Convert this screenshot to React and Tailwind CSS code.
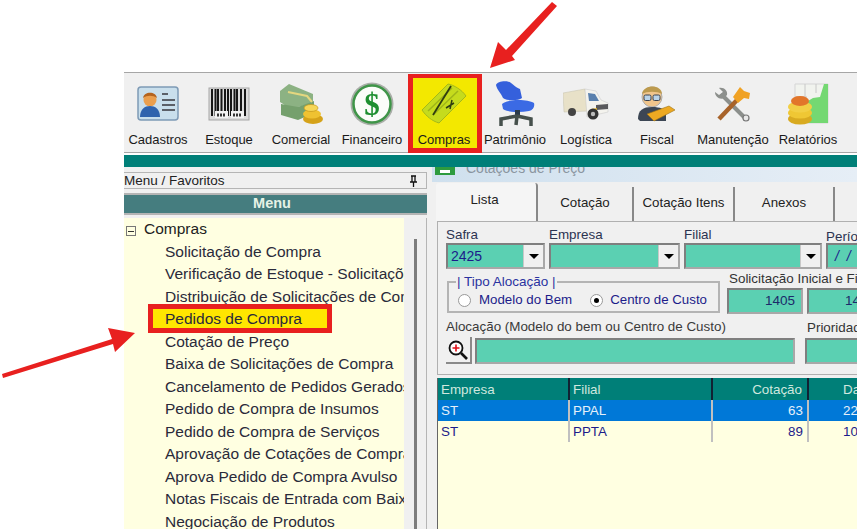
const font = "font-['Liberation_Sans',Arial,sans-serif]";

// toolbar icons drawn by hand, they are little bitmaps in the original
function Cadastros() {
  return (
    <svg width="44" height="38" viewBox="0 0 44 38">
      <rect x="2" y="2" width="40" height="33" rx="3" fill="#c9dfec" stroke="#7e9ab5" strokeWidth="1.500" />
      <circle cx="14" cy="15" r="6.500" fill="#ea9f4e" />
      <path d="M4 32c0-8 5-11 10-11s10 3 10 11z" fill="#2f63ad" />
      <path d="M7 13c1-7 13-7 14 0-4-3-10-3-14 0z" fill="#b4641f" />
      <path d="M26 9h6M26 15h13M26 20h13M26 25h13" stroke="#5b6068" strokeWidth="2.200" />
    </svg>
  );
}

function Estoque() {
  return (
    <svg width="44" height="36" viewBox="0 0 44 36">
      <rect x="2" y="2" width="40" height="32" fill="#dcdcdc" stroke="#a5a5a5" />
      <path d="M5 3v27M8.500 3v27M11 3v27M14.500 3v27M18 3v27M21 3v27M24 3v27M27.500 3v27M30 3v27M34 3v27M38 3v27" stroke="#161616" strokeWidth="2" />
      <rect x="8" y="25" width="13" height="7" fill="#f2f2f2" />
      <rect x="24" y="25" width="13" height="7" fill="#f2f2f2" />
      <path d="M10 29h9M26 29h9" stroke="#333" strokeWidth="3" strokeDasharray="2 1" />
    </svg>
  );
}

function Comercial() {
  return (
    <svg width="46" height="42" viewBox="0 0 46 42">
      <path d="M2 8l9-7 24 10v9L13 26 2 19z" fill="#8cb283" />
      <path d="M3 21l17 3 16-6v12l-16 7-17-5z" fill="#75a06d" />
      <path d="M10 9l19 4 5 6" fill="none" stroke="#e4d77f" strokeWidth="2" />
      <ellipse cx="35" cy="36" rx="10" ry="5" fill="#d5a219" />
      <ellipse cx="34" cy="31" rx="9" ry="4.500" fill="#efc231" />
      <ellipse cx="33" cy="25" rx="7" ry="3.500" fill="#f6d656" stroke="#c4951a" strokeWidth=".7" />
    </svg>
  );
}

function Financeiro() {
  return (
    <svg width="44" height="44" viewBox="0 0 44 44">
      <circle cx="22" cy="22" r="21.500" fill="#a9aea8" />
      <circle cx="22" cy="22" r="18.500" fill="#fbfdf9" stroke="#3f9548" strokeWidth="2.500" />
      <text x="22" y="33" textAnchor="middle" fontSize="31" fontWeight="700" fontFamily="Liberation Serif" fill="#1e8f30">$</text>
    </svg>
  );
}

function ComprasIcon() {
  return (
    <svg width="46" height="44" viewBox="0 0 46 44">
      <path d="M1 28L27 2c6 1 14 6 18 12L18 41C11 39 5 34 1 28z" fill="#c5db1d" stroke="#a3b81a" />
      <path d="M7 29L31 6M12 33L37 9" stroke="#9fb518" strokeWidth="1.500" />
      <path d="M12 33L30 4" stroke="#2f3d10" strokeWidth="1.800" />
      <path d="M25 26l8-5M29 27l2-9" stroke="#2f3d10" strokeWidth="1.500" />
    </svg>
  );
}

function Patrimonio() {
  return (
    <svg width="42" height="48" viewBox="0 0 42 48">
      <path d="M2 5c1-4 12-5 15-2 3 2 4 4 9 6l2 9c-4 3-15 3-19 0C7 13 3 10 2 5z" fill="#3560dc" />
      <path d="M8 24c6-5 25-5 32-1 1 4-1 7-5 8-10 2-22 1-26-2z" fill="#3b6ae4" />
      <path d="M21 30h5v7h-5z" fill="#2b3a4a" />
      <path d="M23 36L7 39v7M23 36l-1 9M23 36l14 3v7" stroke="#46504c" strokeWidth="3.500" fill="none" />
    </svg>
  );
}

function Logistica() {
  return (
    <svg width="46" height="32" viewBox="0 0 46 32">
      <path d="M0 5l22-4 3 22-24 1z" fill="#e8e1c8" stroke="#c5c0ad" strokeWidth=".5" />
      <path d="M22 1l11 2 5 9 7 3v9l-21 5z" fill="#f4f3ee" stroke="#c5c5c5" strokeWidth=".5" />
      <path d="M25 5l7 1 4 7-10 0z" fill="#5a80ad" />
      <path d="M33 17l12-1v5l-12 1z" fill="#59595c" />
      <path d="M28 21l6-1v3h-6z" fill="#e1b42c" />
      <circle cx="9" cy="24" r="4" fill="#444" />
      <circle cx="30" cy="26" r="5.500" fill="#333" />
      <circle cx="30" cy="26" r="2.200" fill="#bbb" />
    </svg>
  );
}

function Fiscal() {
  return (
    <svg width="38" height="38" viewBox="0 0 38 38">
      <circle cx="14" cy="12" r="10" fill="#f0c58c" stroke="#aaa" />
      <path d="M4 9C5-1 24-1 24 9c-5-3-15-3-20 0z" fill="#bc9a4e" />
      <rect x="6" y="10" width="7" height="5.500" rx="1.500" fill="#b9d3e8" stroke="#3a4350" />
      <rect x="15" y="10" width="7" height="5.500" rx="1.500" fill="#b9d3e8" stroke="#3a4350" />
      <path d="M0 34c0-9 5-12 14-12s12 2 14 6v8H2z" fill="#3c4654" />
      <path d="M9 29l22-8 6 4-21 11z" fill="#eda922" stroke="#9c7012" strokeWidth=".6" />
    </svg>
  );
}

function Manutencao() {
  return (
    <svg width="38" height="36" viewBox="0 0 38 36">
      <path d="M7 8l25 25" stroke="#8c8f8c" strokeWidth="4" fill="none" />
      <path d="M1 6c0 5 5 8 9 6l3-3C14 5 10 1 5 2l4 4-4 3z" fill="#8c8f8c" />
      <circle cx="32" cy="32" r="3" fill="#e8e8e8" stroke="#777" strokeWidth="1.200" />
      <path d="M5 33L24 13" stroke="#a8632a" strokeWidth="4.500" />
      <path d="M19 11l7-10 4 4 6 2-1 6-5-1-6 5z" fill="#f0a224" />
    </svg>
  );
}

function Relatorios() {
  return (
    <svg width="42" height="42" viewBox="0 0 42 42">
      <path d="M8 1h33v39H8z" fill="#f1f3ee" stroke="#d5d5d5" />
      <path d="M18 1v14M29 1v9M8 14h12" stroke="#c8c8c8" />
      <path d="M14 22l12-7 7-1 4-13h4v39H14z" fill="#74d872" />
      <ellipse cx="13" cy="36" rx="12" ry="5.500" fill="#d8aa20" />
      <ellipse cx="13" cy="30" rx="12" ry="5.500" fill="#efc734" />
      <ellipse cx="13" cy="24" rx="12" ry="5.500" fill="#f2cf45" />
      <ellipse cx="13" cy="18" rx="9" ry="5" fill="#e2762a" />
    </svg>
  );
}

const toolbarItems = [
  { label: 'Cadastros', w: 'w-[68px]', icon: <Cadastros /> },
  { label: 'Estoque', w: 'w-[74px]', icon: <Estoque /> },
  { label: 'Comercial', w: 'w-[70px]', icon: <Comercial /> },
  { label: 'Financeiro', w: 'w-[72px]', icon: <Financeiro /> },
  { label: 'Compras', w: 'w-[74px]', icon: <ComprasIcon />, active: true },
  { label: 'Patrimônio', w: 'w-[66px]', icon: <Patrimonio /> },
  { label: 'Logística', w: 'w-[76px]', icon: <Logistica /> },
  { label: 'Fiscal', w: 'w-[66px]', icon: <Fiscal /> },
  { label: 'Manutenção', w: 'w-[86px]', icon: <Manutencao /> },
  { label: 'Relatórios', w: 'w-[64px]', icon: <Relatorios /> },
];

const menuItems = [
  'Solicitação de Compra',
  'Verificação de Estoque - Solicitações',
  'Distribuição de Solicitações de Compra',
  'Pedidos de Compra',
  'Cotação de Preço',
  'Baixa de Solicitações de Compra',
  'Cancelamento de Pedidos Gerados',
  'Pedido de Compra de Insumos',
  'Pedido de Compra de Serviços',
  'Aprovação de Cotações de Compra',
  'Aprova Pedido de Compra Avulso',
  'Notas Fiscais de Entrada com Baixa',
  'Negociação de Produtos',
];

const rows = [
  { empresa: 'ST', filial: 'PPAL', cotacao: '63', data: '22', selected: true },
  { empresa: 'ST', filial: 'PPTA', cotacao: '89', data: '10' },
];

function Sunken({ className = '', children }) {
  return (
    <div className={`bg-[#5bd0b2] border-2 border-t-[#7f7f7f] border-l-[#7f7f7f] border-r-[#a8a8a8] border-b-[#a8a8a8] ${className}`}>
      {children}
    </div>
  );
}

function Combo({ value }) {
  return (
    <Sunken className="h-[26px] flex items-center justify-between">
      <span className="pl-[3px] text-[14px] text-[#1c1c8a]">{value}</span>
      <div className="w-[20px] h-full bg-[#f0f0f0] flex items-center justify-center border-l border-[#c8c8c8]">
        <div className="w-0 h-0 border-x-[5px] border-x-transparent border-t-[5px] border-t-black" />
      </div>
    </Sunken>
  );
}

export default function App() {
  return (
    <div className={`relative w-[857px] h-[529px] overflow-hidden bg-white pl-[124px] pt-[72px] ${font}`}>
      <div className="h-full flex flex-col bg-[#f0f0f0]">
        {/* Toolbar */}
        <div className="h-[81px] shrink-0 flex items-stretch border-y border-[#a6a6a6] bg-[#f0f0f0]">
          {toolbarItems.map((item) => (
            <div
              key={item.label}
              className={`${item.w} shrink-0 flex flex-col items-center ${item.active ? 'bg-[#f3e800] border-[5px] border-t-[4px] border-[#e8201f] mt-[1px] -mb-[1px] pt-[1px] pr-[2px]' : 'pt-[6px]'}`}
            >
              <div className="h-[50px] flex items-center justify-center blur-[0.4px]">{item.icon}</div>
              <span className="text-[13px] leading-[16px] mt-[3px] text-[#1a1a1a] whitespace-nowrap">{item.label}</span>
            </div>
          ))}
        </div>
        <div className="h-[14px] shrink-0 bg-[#007f78] border-t-2 border-white" />

        <div className="flex-1 flex min-h-0">
          {/* Sidebar */}
          <div className="w-[303px] shrink-0 flex flex-col bg-[#f0f0f0]">
            <div className="h-[17px] shrink-0 mt-[5px] pt-[1px] flex items-center justify-between pr-[8px] border border-l-0 border-[#b5b5b5] text-[13.500px] text-[#222]">
              <span>Menu / Favoritos</span>
              <svg width="9" height="12" viewBox="0 0 9 12">
                <path d="M2 1h5M3 1v6M6 1v6M1 7h7M4.500 7v5" stroke="#111" strokeWidth="1.300" fill="none" />
              </svg>
            </div>
            <div className="h-[22px] shrink-0 mt-[4px] bg-[#457d7f] border-y-2 border-[#b4b4b4] flex items-center justify-center pr-[7px] text-[14.500px] font-bold text-[#e6f2e6]">
              Menu
            </div>
            <div className="flex-1 flex min-h-0 mt-[3px]">
              <div className="w-[280px] bg-[#ffffe1] overflow-hidden shrink-0">
                <div className="flex items-center h-[22px] text-[15.500px] text-[#222]">
                  <span className="ml-[2px] mt-[4px] w-[10px] h-[10px] border border-[#777] flex items-center justify-center">
                    <span className="w-[6px] h-[1px] bg-[#333]" />
                  </span>
                  <span className="ml-[8px]">Compras</span>
                </div>
                {menuItems.map((item) => (
                  <div key={item} className="h-[22.500px] flex items-center pl-[41px] text-[15.500px] text-[#2a2a3a] whitespace-nowrap">
                    {item === 'Pedidos de Compra' ? (
                      <span className="-ml-[17px] w-[184px] h-[29px] shrink-0 pl-[12px] bg-[#ffe600] border-[5px] border-[#e8201f] flex items-center">{item}</span>
                    ) : (
                      item
                    )}
                  </div>
                ))}
              </div>
              <div className="flex-1 flex justify-center pt-[21px] border-r border-[#b5b5b5]">
                <div className="w-[3px] h-full bg-[#7d7d7d]" />
              </div>
            </div>
          </div>

          {/* Form panel */}
          <div className="flex-1 min-w-0 overflow-hidden flex flex-col ml-[5px]">
            <div className="h-[15px] shrink-0 bg-gradient-to-r from-[#cfe0ee] to-[#e6eef6] flex items-start pl-[3px] overflow-hidden">
              <div className="w-[20px] h-[8px] bg-[#2e9b3e] shrink-0 flex items-center justify-center">
                <div className="w-[10px] h-[3px] bg-white" />
              </div>
              <span className="ml-[11px] -mt-[7px] text-[14px] leading-[16px] text-[#8a95a0] whitespace-nowrap">Cotações de Preço</span>
            </div>
            <div className="h-[39px] shrink-0 flex items-end pl-[4px] text-[13.300px] text-[#222]">
              <div className="w-[102px] h-[38px] shrink-0 bg-[#f5f5f5] border-r-2 border-[#888] rounded-t-[3px] flex items-center justify-center pb-[4px] pr-[3px]">Lista</div>
              <div className="w-[96px] h-[34px] shrink-0 border-r-2 border-[#888] flex items-center justify-center pb-[3px]">Cotação</div>
              <div className="w-[101px] h-[34px] shrink-0 border-r-2 border-[#888] flex items-center justify-center pb-[3px]">Cotação Itens</div>
              <div className="w-[100px] h-[34px] shrink-0 border-r-2 border-[#888] flex items-center justify-center pb-[3px]">Anexos</div>
            </div>
            <div className="h-[154px] shrink-0 border border-r-0 border-[#b0b0b0] ml-[5px] pl-[8px] pt-[5px] text-[13.400px] text-[#333]">
              <div className="flex gap-[4px]">
                <div className="w-[99px] shrink-0">
                  <div className="h-[16px] leading-[16px] text-[#2b3350]">Safra</div>
                  <Combo value="2425" />
                </div>
                <div className="w-[131px] shrink-0">
                  <div className="h-[16px] leading-[16px] text-[#2b3350]">Empresa</div>
                  <Combo />
                </div>
                <div className="w-[138px] shrink-0">
                  <div className="h-[16px] leading-[16px] text-[#2b3350]">Filial</div>
                  <Combo />
                </div>
                <div className="shrink-0 whitespace-nowrap">
                  <div className="h-[16px] leading-[16px] mt-[2px] text-[#2b3350]">Período</div>
                  <Sunken className="-mt-[2px] h-[26px] w-[100px] pl-[7px] text-[14px] leading-[22px] tracking-[2px] text-[#1c1c8a] italic">/ /</Sunken>
                </div>
              </div>
              <div className="flex mt-[2px] gap-[7px]">
                <div className="relative ml-[1px] w-[273px] h-[32px] mt-[10px] shrink-0 border-2 border-[#b4b4b4] flex items-center pl-[9px] pt-[6px] text-[13.300px] text-[#1c1c8a]">
                  <span className="absolute -top-[9px] left-[7px] bg-[#f0f0f0] text-[#2a33a0] text-[13.500px] leading-[16px] px-[1px] whitespace-nowrap">| Tipo Alocação |</span>
                  <span className="w-[13px] h-[13px] rounded-full bg-white border border-[#999] shrink-0" />
                  <span className="ml-[8px] whitespace-nowrap">Modelo do Bem</span>
                  <span className="ml-[18px] w-[13px] h-[13px] rounded-full bg-white border border-[#999] flex items-center justify-center shrink-0">
                    <span className="w-[5px] h-[5px] rounded-full bg-black" />
                  </span>
                  <span className="ml-[7px] whitespace-nowrap">Centro de Custo</span>
                </div>
                <div className="whitespace-nowrap shrink-0">
                  <div className="h-[16px] leading-[16px] pl-[2px] text-[#333]">Solicitação Inicial e Final</div>
                  <div className="flex gap-[4px] mt-[1px]">
                    <Sunken className="w-[76px] h-[26px] text-right pr-[6px] text-[13.500px] leading-[22px] text-[#1c2a6a]">1405</Sunken>
                    <Sunken className="w-[76px] h-[26px] text-right pr-[6px] text-[13.500px] leading-[22px] text-[#1c2a6a]">1406</Sunken>
                  </div>
                </div>
              </div>
              <div className="flex mt-[5px] gap-[10px]">
                <div className="shrink-0">
                  <div className="h-[16px] leading-[16px] text-[#3a3a3a] whitespace-nowrap">Alocação (Modelo do bem ou Centro de Custo)</div>
                  <div className="flex gap-[3px] mt-[2px]">
                    <div className="w-[26px] h-[27px] bg-[#f0f0f0] border-r-2 border-b-2 border-[#8a8a8a] flex items-center justify-center">
                      <svg width="22" height="22" viewBox="0 0 22 22">
                        <circle cx="9" cy="9" r="6.500" fill="#fff" stroke="#111" strokeWidth="1.800" />
                        <path d="M5.500 9h7M9 5.500v7" stroke="#e0101a" strokeWidth="1.600" />
                        <path d="M14 14l6 6" stroke="#111" strokeWidth="2.600" />
                      </svg>
                    </div>
                    <Sunken className="w-[320px] h-[26px] mt-[1px]" />
                  </div>
                </div>
                <div className="whitespace-nowrap shrink-0">
                  <div className="h-[16px] leading-[16px] mt-[1px] pl-[2px] text-[#333]">Prioridade</div>
                  <Sunken className="w-[80px] h-[26px] mt-[2px]" />
                </div>
              </div>
            </div>
            {/* Grid */}
            <div className="flex-1 mt-[3px] ml-[5px] bg-[#ffffe1] border-l border-[#666] overflow-hidden">
              <div className="flex h-[22px] bg-[#007f78] text-[13.400px] text-[#cfe8df] items-center">
                <div className="w-[132px] shrink-0 pl-[3px] h-full leading-[24px] border-r-2 border-[#123]">Empresa</div>
                <div className="w-[143px] shrink-0 pl-[3px] h-full leading-[24px] border-r-2 border-[#123]">Filial</div>
                <div className="w-[96px] shrink-0 pr-[5px] h-full leading-[24px] text-right border-r-2 border-[#123]">Cotação</div>
                <div className="pl-[34px] h-full leading-[24px]">Data</div>
              </div>
              {rows.map((r) => (
                <div key={r.filial} className={`flex h-[21px] text-[13.400px] leading-[21px] items-center ${r.selected ? 'bg-[#0078d7] text-[#e6f0fa]' : 'text-[#1c1c8a]'}`}>
                  <div className="w-[132px] shrink-0 pl-[3px] border-r-2 border-[#c0c0c0] h-full">{r.empresa}</div>
                  <div className="w-[143px] shrink-0 pl-[3px] border-r-2 border-[#c0c0c0] h-full">{r.filial}</div>
                  <div className="w-[96px] shrink-0 pr-[4px] text-right border-r-2 border-[#c0c0c0] h-full">{r.cotacao}</div>
                  <div className="pl-[34px]">{r.data}</div>
                </div>
              ))}
            </div>
          </div>
        </div>
      </div>

      {/* Annotation arrows */}
      <svg className="absolute left-[480px] top-0 w-[90px] h-[75px]" viewBox="0 0 90 75" fill="#e8201f">
        <path d="M10 68L18 42 26 50 72 2 77 6 32 56 35 60z" />
      </svg>
      <svg className="absolute left-0 top-[320px] w-[150px] h-[65px]" viewBox="0 0 150 65" fill="#e8201f">
        <path d="M135 13L108 8 112 19 2 54 3 58 113 24 115 32z" />
      </svg>
    </div>
  );
}
